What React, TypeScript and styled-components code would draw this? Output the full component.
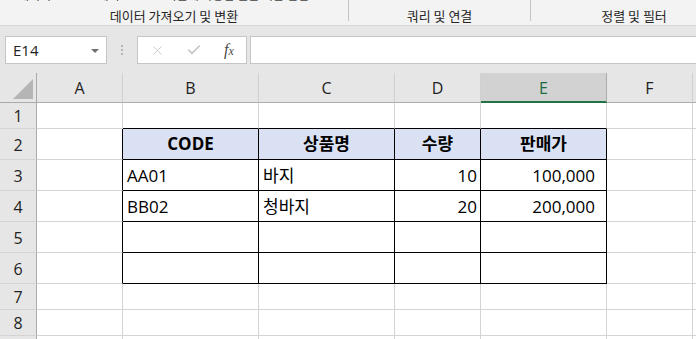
import styled, { createGlobalStyle } from 'styled-components'
import { X, Check } from 'lucide-react'

type Align = 'left' | 'right' | 'center'

const GlobalStyle = createGlobalStyle`
  html, body {
    margin: 0;
    padding: 0;
    background: #fff;
  }
  body {
    font-family: "Open Sans", "Noto Sans CJK KR", sans-serif;
    color: #000;
  }
`

const columnWidths = [86, 136, 136, 86, 126, 86, 86]
const letters = ['A', 'B', 'C', 'D', 'E', 'F', 'G']
const selectedColumn = 4

interface RowData {
  height: number
  header?: boolean
  values?: string[]
}

const rows: RowData[] = [
  { height: 26 },
  { height: 31, header: true, values: ['CODE', '상품명', '수량', '판매가'] },
  { height: 31, values: ['AA01', '바지', '10', '100,000'] },
  { height: 31, values: ['BB02', '청바지', '20', '200,000'] },
  { height: 31 },
  { height: 31 },
  { height: 26 },
  { height: 26 },
  { height: 26 },
]

// table occupies B2:E6 (col index 1..4, row index 1..5)
const inTable = (r: number, c: number) => r >= 1 && r <= 5 && c >= 1 && c <= 4
const dataAlign: Align[] = ['left', 'left', 'left', 'right', 'right', 'left', 'left']
const dataPadRight = [4, 4, 4, 3, 11, 4, 4]

function App() {
  return (
    <>
      <GlobalStyle />
      <Window>
        <Ribbon>
          <RibbonGroup $width={348}>
            <CommandStrip $pad={18}>
              <Command>데이터</Command>
              <Command $gap={25}>CSV에서</Command>
              <Command $gap={46}>최근에 사용한 원본 기존 연결</Command>
            </CommandStrip>
            <GroupLabel>데이터 가져오기 및 변환</GroupLabel>
          </RibbonGroup>
          <Separator />
          <RibbonGroup $width={181}>
            <CommandStrip $pad={30}>
              <Command>모</Command>
            </CommandStrip>
            <GroupLabel>쿼리 및 연결</GroupLabel>
          </RibbonGroup>
          <Separator />
          <RibbonGroup $width={206}>
            <CommandStrip $pad={0} />
            <GroupLabel>정렬 및 필터</GroupLabel>
          </RibbonGroup>
        </Ribbon>

        <FormulaBar>
          <NameBox>
            <span>E14</span>
            <DropArrow />
          </NameBox>
          <Grip>
            <i />
            <i />
            <i />
          </Grip>
          <FormulaButtons>
            <X size={15} strokeWidth={1.4} color='#c4c4c4' />
            <Check size={16} strokeWidth={2.4} color='#c4c4c4' />
            <Fx>
              f<small>x</small>
            </Fx>
          </FormulaButtons>
          <FormulaInput />
        </FormulaBar>

        <Sheet $rows={rows.map(r => r.height)}>
          <Corner>
            <svg width='20' height='20' viewBox='0 0 20 20'>
              <polygon points='20,0 20,20 0,20' fill='#b5b5b5' />
            </svg>
          </Corner>
          {letters.map((l, i) => (
            <ColumnHeader key={l} $selected={i === selectedColumn}>
              {l}
            </ColumnHeader>
          ))}
          {rows.map((row, r) => (
            <Row key={r}>
              <RowHeader>{r + 1}</RowHeader>
              {letters.map((_, c) => {
                const value = c >= 1 && c <= 4 ? row.values?.[c - 1] : undefined
                return (
                  <Cell
                    key={c}
                    $edgeRight={inTable(r, c) || inTable(r, c + 1)}
                    $edgeBottom={inTable(r, c) || inTable(r + 1, c)}
                    $fill={!!row.header && inTable(r, c)}
                    $bold={!!row.header}
                    $align={row.header ? 'center' : dataAlign[c]}
                    $padRight={row.header ? 4 : dataPadRight[c]}
                  >
                    {value}
                  </Cell>
                )
              })}
            </Row>
          ))}
        </Sheet>
      </Window>
    </>
  )
}

const Window = styled.div`
  width: 696px;
  height: 339px;
  overflow: hidden;
  display: flex;
  flex-direction: column;
`

const Ribbon = styled.div`
  height: 25px;
  flex-shrink: 0;
  display: flex;
  background: #f3f3f3;
  border-bottom: 1px solid #d5d5d5;
  font-family: "Noto Sans CJK KR", sans-serif;
`

const RibbonGroup = styled.div<{$width: number}>`
  width: ${p => p.$width}px;
  flex-shrink: 0;
  display: flex;
  flex-direction: column;
`

const Separator = styled.div`
  width: 1px;
  height: 21px;
  flex-shrink: 0;
  background: #c4c4c4;
`

const CommandStrip = styled.div<{$pad: number}>`
  height: 8px;
  overflow: hidden;
  display: flex;
  padding-left: ${p => p.$pad}px;
  font-size: 12px;
  line-height: 14px;
  color: #444;
  white-space: nowrap;
`

const Command = styled.span<{$gap?: number}>`
  margin-top: -12px;
  margin-left: ${p => p.$gap ?? 0}px;
`

const GroupLabel = styled.div`
  height: 16px;
  line-height: 16px;
  font-size: 13px;
  color: #262626;
  text-align: center;
  white-space: nowrap;
`

const FormulaBar = styled.div`
  height: 47px;
  flex-shrink: 0;
  box-sizing: border-box;
  padding: 10px 0 9px 5px;
  display: flex;
  align-items: stretch;
  background: #e6e6e6;
`

const Box = styled.div`
  box-sizing: border-box;
  height: 28px;
  background: #fff;
  border: 1px solid #c6c6c6;
`

const NameBox = styled(Box)`
  width: 102px;
  display: flex;
  align-items: center;
  justify-content: space-between;
  padding: 0 7px 0 7px;
  font-size: 15px;
  color: #222;
`

const DropArrow = styled.span`
  width: 0;
  height: 0;
  border-left: 4px solid transparent;
  border-right: 4px solid transparent;
  border-top: 4px solid #707070;
  margin-top: 1px;
`

const Grip = styled.div`
  width: 30px;
  display: flex;
  flex-direction: column;
  align-items: center;
  justify-content: center;
  gap: 2px;

  i {
    width: 2px;
    height: 2px;
    background: #b4b4b4;
  }
`

const FormulaButtons = styled(Box)`
  width: 110px;
  display: flex;
  align-items: center;
  padding-left: 12px;
  gap: 21px;
`

const Fx = styled.span`
  font-family: "Liberation Serif", serif;
  font-style: italic;
  font-size: 16px;
  color: #4a4a4a;
  margin-left: 1px;

  small {
    font-size: 12px;
  }
`

const FormulaInput = styled(Box)`
  flex: 1;
  margin-left: 3px;
  margin-right: -2px;
`

const Sheet = styled.div<{$rows: number[]}>`
  display: grid;
  grid-template-columns: 37px ${columnWidths.map(w => `${w}px`).join(' ')};
  grid-template-rows: 30px ${p => p.$rows.map(h => `${h}px`).join(' ')};
  flex-shrink: 0;
`

const Row = styled.div`
  display: contents;
`

const HeaderBase = styled.div`
  box-sizing: border-box;
  display: flex;
  align-items: center;
  justify-content: center;
  background: #e6e6e6;
  font-size: 16px;
  color: #222;
`

const Corner = styled(HeaderBase)`
  align-items: flex-end;
  justify-content: flex-end;
  padding: 0 3px 3px 0;
  border-right: 1px solid #ababab;
  border-bottom: 1px solid #ababab;
`

const ColumnHeader = styled(HeaderBase)<{$selected: boolean}>`
  padding-top: 1px;
  border-right: 1px solid ${p => (p.$selected ? '#ababab' : '#d0d0d0')};
  border-bottom: ${p => (p.$selected ? '2px solid #217346' : '1px solid #ababab')};
  background: ${p => (p.$selected ? '#d2d2d2' : '#e6e6e6')};
  color: ${p => (p.$selected ? '#1d6a40' : '#222')};
`

const RowHeader = styled(HeaderBase)`
  border-right: 1px solid #ababab;
  border-bottom: 1px solid #d4d4d4;
  padding-top: 1px;
`

const Cell = styled.div<{
  $edgeRight: boolean
  $edgeBottom: boolean
  $fill: boolean
  $bold: boolean
  $align: Align
  $padRight: number
}>`
  box-sizing: border-box;
  display: flex;
  align-items: ${p => (p.$bold ? 'center' : 'flex-end')};
  justify-content: ${p =>
    p.$align === 'center' ? 'center' : p.$align === 'right' ? 'flex-end' : 'flex-start'};
  padding: 0 ${p => p.$padRight}px ${p => (p.$bold ? 0 : 4)}px 4px;
  background: ${p => (p.$fill ? '#d9e1f2' : '#fff')};
  border-right: 1px solid ${p => (p.$edgeRight ? '#000' : '#d4d4d4')};
  border-bottom: 1px solid ${p => (p.$edgeBottom ? '#000' : '#d4d4d4')};
  font-size: 17px;
  line-height: 20px;
  font-weight: ${p => (p.$bold ? 700 : 400)};
  white-space: nowrap;
  overflow: hidden;
`

export default App
